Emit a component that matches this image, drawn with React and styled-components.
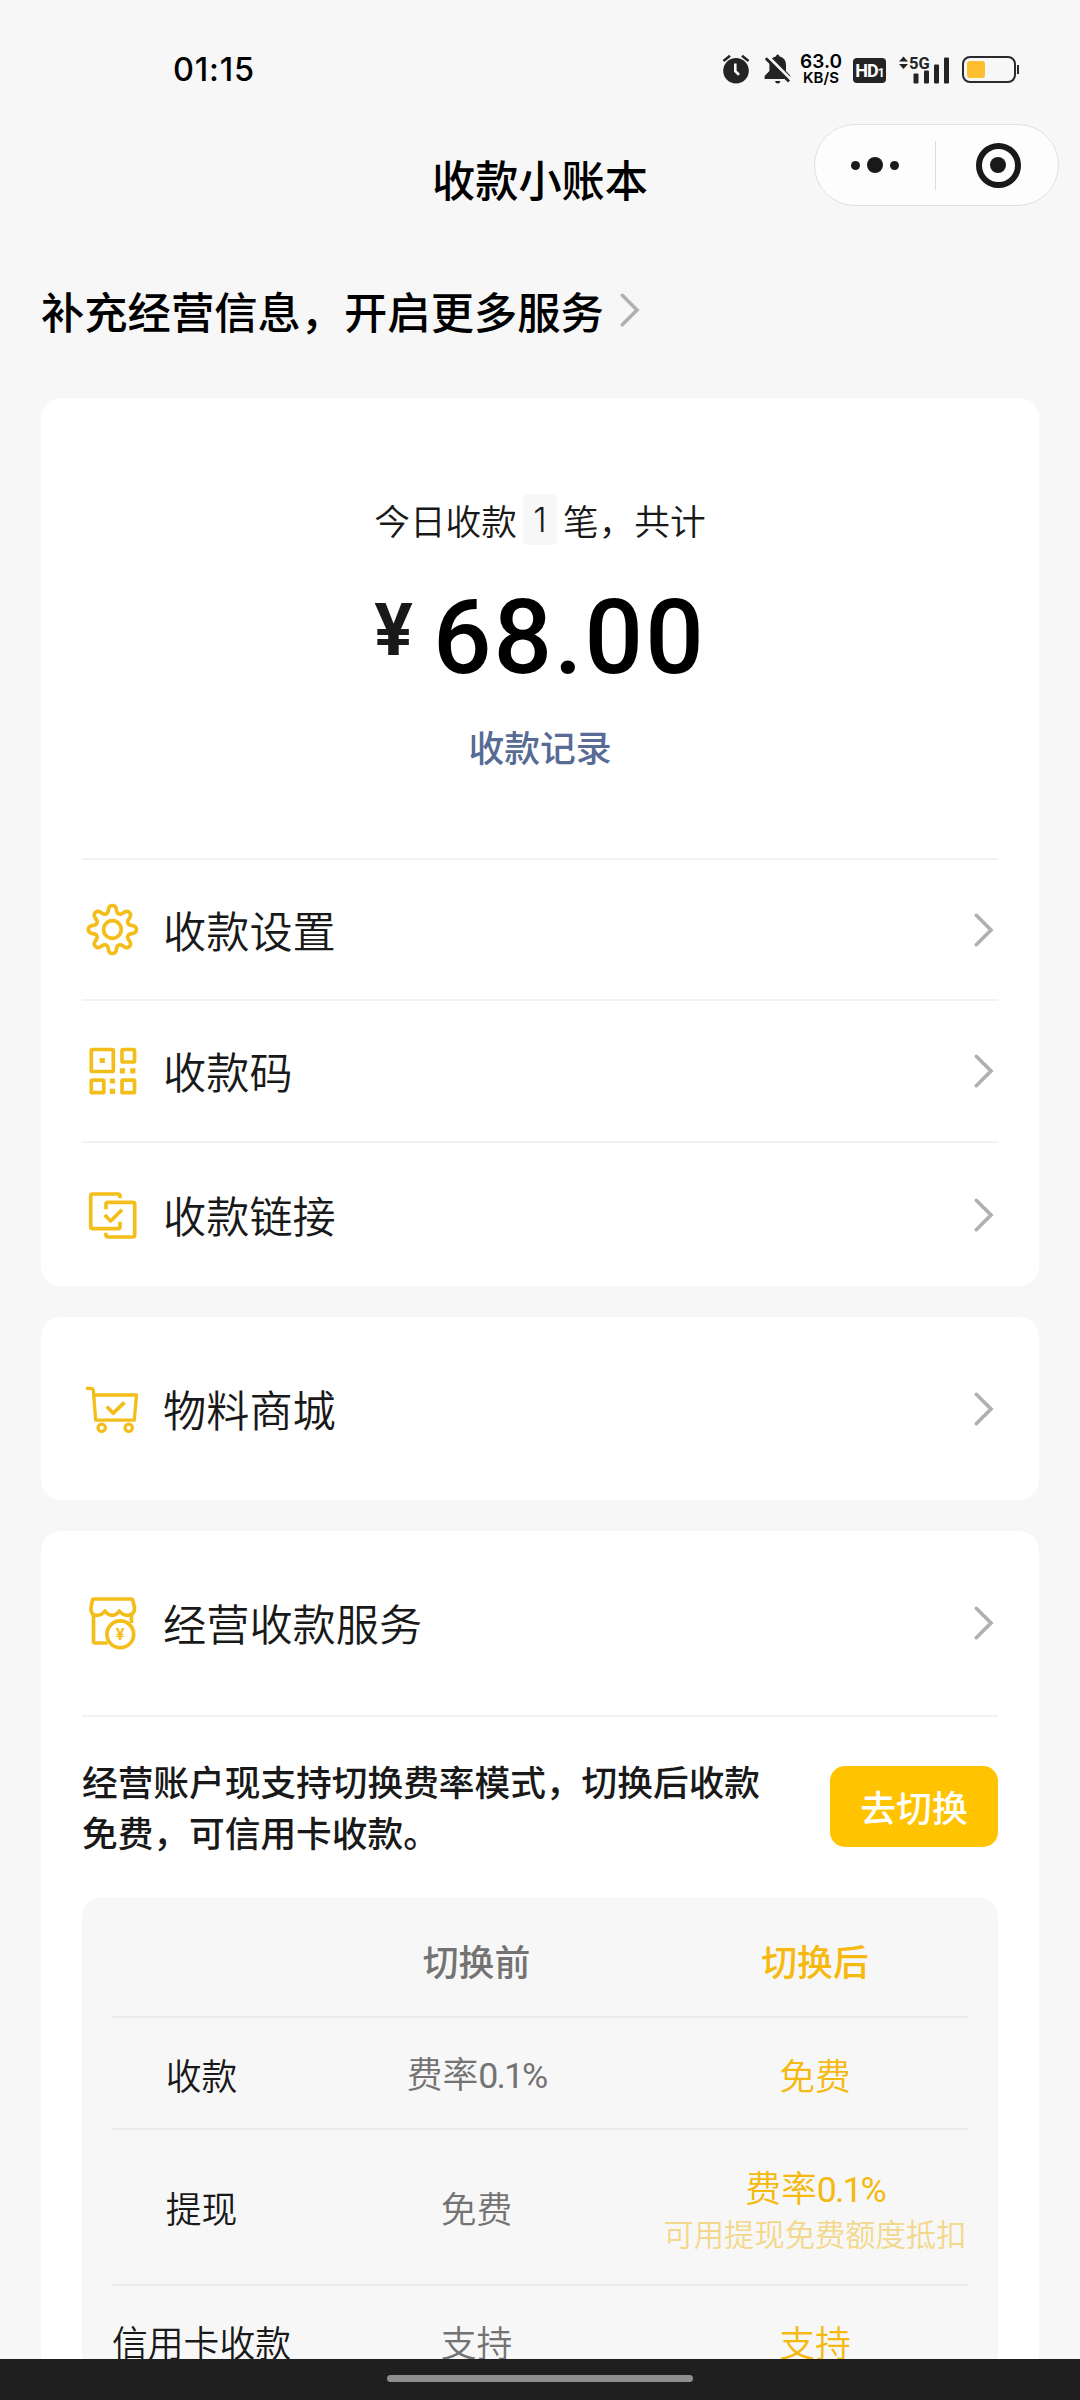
import React from "react";
import styled, { createGlobalStyle } from "styled-components";

const YELLOW = "#f4be1a";

const GlobalStyle = createGlobalStyle`
    * {
        box-sizing: border-box;
    }
    body {
        margin: 0;
        background: #f7f7f7;
        font-family: "Noto Sans CJK SC", sans-serif;
        color: #191919;
    }
`;

const Phone = styled.div`
    width: 1080px;
    height: 2400px;
    display: flex;
    flex-direction: column;
    overflow: hidden;
    background: #f7f7f7;
`;

const StatusBar = styled.header`
    flex: none;
    height: 124px;
    padding: 14px 61px 0 173px;
    display: flex;
    align-items: center;
    justify-content: space-between;
    font-family: Inter, sans-serif;
    color: #000;
`;

const Clock = styled.span`
    padding-top: 2px;
    font-size: 32.5px;
    font-weight: 450;
    line-height: 40px;
    letter-spacing: 0.8px;
`;

const StatusIcons = styled.div`
    display: flex;
    align-items: center;
`;

const Speed = styled.div`
    width: 42px;
    margin: 0 11px 0 8px;
    text-align: center;
    font-size: 19px;
    font-weight: 600;
    line-height: 17px;
    white-space: nowrap;

    small {
        display: block;
        font-size: 15px;
        font-weight: 600;
        line-height: 15px;
    }
`;

const HdBadge = styled.span`
    width: 33px;
    height: 25px;
    margin: 2px 13px 0 0;
    border-radius: 4px;
    background: #242424;
    color: #fff;
    display: flex;
    align-items: baseline;
    justify-content: center;
    font-family: Roboto, sans-serif;
    font-size: 18px;
    font-weight: 700;
    line-height: 25px;
    letter-spacing: -1px;

    small {
        font-size: 12px;
    }
`;

const Battery = styled.div`
    width: 54px;
    height: 27px;
    padding: 3px;
    border: 2px solid #2a2a2e;
    border-radius: 8px;
    margin: 0 1px 0 12px;
`;

const Charge = styled.div`
    width: 18px;
    height: 17px;
    border-radius: 3px;
    background: #ffbe2e;
`;

const BatteryTip = styled.div`
    width: 2px;
    height: 9px;
    background: #2a2a2e;
`;

const TitleBar = styled.div`
    flex: none;
    height: 82px;
    padding-right: 21px;
    display: grid;
    grid-template-columns: 266px 1fr 245px;
`;

const Title = styled.h1`
    grid-column: 2;
    margin: 28px 0 0;
    text-align: center;
    font-size: 43.2px;
    font-weight: 500;
    line-height: 52px;
    color: #000;
`;

const Capsule = styled.div`
    height: 82px;
    border: 1px solid #e0e0e0;
    border-radius: 41px;
    background: #fdfdfd;
    display: flex;
    align-items: center;
`;

const CapsuleHalf = styled.div`
    flex: 1;
    display: flex;
    justify-content: center;
    align-items: center;
    gap: 7px;
    padding-left: ${(props) => (props.$close ? 3 : 0)}px;
`;

const CapsuleDivider = styled.div`
    width: 1px;
    height: 49px;
    background: #dcdcdc;
`;

const Dot = styled.span`
    width: ${(props) => props.$size}px;
    height: ${(props) => props.$size}px;
    border-radius: 50%;
    background: #191919;
`;

const Ring = styled.span`
    width: 45px;
    height: 45px;
    border: 6px solid #191919;
    border-radius: 50%;
    display: flex;
    align-items: center;
    justify-content: center;
`;

const Notice = styled.div`
    flex: none;
    height: 192px;
    padding: 15px 0 0 41px;
    display: flex;
    align-items: center;
    gap: 16px;
    font-size: 43.3px;
    font-weight: 500;
    color: #000;
`;

const Cards = styled.main`
    flex: 1;
    min-height: 0;
    overflow: hidden;
    padding: 0 41px;
    display: flex;
    flex-direction: column;
    gap: 31px;
`;

const Card = styled.section`
    flex: none;
    padding: 0 41px;
    border-radius: 20px;
    background: #fff;
`;

const Summary = styled.div`
    height: 460px;
    padding-top: 96px;
    display: flex;
    flex-direction: column;
    align-items: center;
`;

const Today = styled.div`
    display: flex;
    align-items: center;
    font-size: 35.7px;
    font-weight: 350;
    line-height: 51px;
`;

const Count = styled.span`
    width: 34px;
    margin: 0 6px;
    border-radius: 5px;
    background: #f7f7f7;
    text-align: center;
    font-family: Inter, sans-serif;
    font-size: 34px;
    font-weight: 300;
`;

const Amount = styled.div`
    height: 100px;
    margin-top: 42px;
    display: flex;
    align-items: flex-start;
    font-family: Roboto, sans-serif;
    font-size: 103px;
    font-weight: 500;
    line-height: 102px;
    letter-spacing: 2px;
    color: #000;
`;

const Currency = styled.span`
    margin-right: 20px;
    font-size: 72px;
    font-weight: 700;
    line-height: 88px;
    letter-spacing: 0;
    color: #191919;
`;

const RecordLink = styled.a`
    margin-top: 33px;
    font-size: 35.8px;
    font-weight: 500;
    line-height: 52px;
    color: #576b95;
`;

const Row = styled.div`
    height: ${(props) => props.$height}px;
    border-top: ${(props) => (props.$divided ? "2px solid #f2f2f2" : "none")};
    padding-right: 4px;
    display: flex;
    align-items: center;
`;

const RowLabel = styled.span`
    flex: 1;
    margin-left: 21px;
    font-size: 43.2px;
    font-weight: 350;
    line-height: 60px;
    padding-bottom: 2px;
`;

const Switch = styled.div`
    height: 183px;
    border-top: 2px solid #f2f2f2;
    padding-bottom: 3px;
    display: flex;
    align-items: center;
    justify-content: space-between;
`;

const SwitchText = styled.p`
    width: 694px;
    margin: 0;
    font-size: 35.7px;
    font-weight: 500;
    line-height: 51px;
`;

const SwitchButton = styled.button`
    width: 168px;
    height: 81px;
    padding: 0;
    border: 0;
    border-radius: 15px;
    background: #ffc300;
    color: #fff;
    font-family: inherit;
    font-size: 35.8px;
    font-weight: 500;
`;

const Table = styled.div`
    padding: 0 30px;
    border-radius: 18px;
    background: #f7f7f7;
`;

const TableRow = styled.div`
    height: ${(props) => props.$height}px;
    border-bottom: 2px solid #eaeaea;
    padding-top: ${(props) => props.$top || 0}px;
    display: grid;
    grid-template-columns: 179px 1fr 306px;
    align-items: center;
    text-align: center;
    font-size: 35.8px;
    font-weight: ${(props) => (props.$head ? 500 : 350)};
    line-height: 50px;
`;

const Before = styled.span`
    color: #737373;
`;

const After = styled.span`
    color: #f5b90f;
`;

const Rate = styled.span`
    font-family: Roboto, sans-serif;
    font-weight: 400;
    letter-spacing: -2px;
`;

const Hint = styled.small`
    display: block;
    margin-top: -3px;
    font-size: 30.3px;
    line-height: 42px;
    color: #f3d78a;
    white-space: nowrap;
`;

const HomeBar = styled.footer`
    flex: none;
    height: 41px;
    padding-top: 16px;
    background: #1f1f1f;

    &::before {
        content: "";
        display: block;
        width: 306px;
        height: 7px;
        margin: 0 auto;
        border-radius: 4px;
        background: #8f8f8f;
    }
`;

const LineIcon = styled.svg.attrs({ width: 60, height: 60, viewBox: "0 0 60 60" })`
    flex: none;
    fill: none;
    stroke: ${YELLOW};
    stroke-width: 3.7;
    stroke-linejoin: round;
`;

// eight rounded teeth around the centre
const gearPath = () => {
    const points = [];
    for (let i = 0; i < 240; i++) {
        const a = (i / 240) * Math.PI * 2;
        const wave = Math.cos(8 * a);
        const r = 20.4 + 3.6 * (Math.tanh(1.4 * wave) / Math.tanh(1.4));
        points.push(`${(30.4 + r * Math.cos(a)).toFixed(2)} ${(29.5 + r * Math.sin(a)).toFixed(2)}`);
    }
    return `M${points.join("L")}Z`;
};

const GearIcon = () => (
    <LineIcon>
        <path d={gearPath()} />
        <circle cx="30.4" cy="29.5" r="8.8" />
    </LineIcon>
);

const CodeIcon = () => (
    <LineIcon>
        <rect x="9.3" y="8.5" width="22" height="22" rx="1" />
        <rect x="40" y="8.5" width="12.5" height="12.5" rx="1" />
        <rect x="9.3" y="39.2" width="12.5" height="12.5" rx="1" />
        <rect x="40" y="39.2" width="12.5" height="12.5" rx="1" />
        <path
            d="M17.7 19.5h5.2M37.8 29.8h5.2M48.2 29.8h5.2M27.8 40h5.2M27.8 50.3h5.2"
            strokeWidth="5.2"
        />
    </LineIcon>
);

const LinkIcon = () => (
    <LineIcon>
        <path d="M38 13.3V11Q38 9 36 9H10.7Q8.7 9 8.7 11V41.7Q8.7 43.7 10.7 43.7H36Q38 43.7 38 41.7V36.7" />
        <path d="M24 24.3V19.3Q24 17.3 26 17.3H50.7Q52.7 17.3 52.7 19.3V50Q52.7 52 50.7 52H26Q24 52 24 50V47.7" />
        <path d="M22.7 30l6 6L40 24.7" />
    </LineIcon>
);

const CartIcon = () => (
    <LineIcon>
        <path d="M4 9.3H8.5Q11.2 9.3 11.4 12L13.7 41.2H52.3L54.5 16H11.8" strokeWidth="3.3" />
        <path d="M24.7 27.5l6.6 6.7L42.5 23.3" />
        <circle cx="19.7" cy="48.8" r="3.7" strokeWidth="3.2" />
        <circle cx="46.7" cy="48.8" r="3.7" strokeWidth="3.2" />
    </LineIcon>
);

const ShopIcon = () => (
    <LineIcon>
        <path d="M11.5 6H49.2Q50.4 6 50.7 7L52.5 14.5Q52.8 22.3 45.5 22.3Q40.5 22.3 37.3 18Q34.5 22.3 30.3 22.3Q26 22.3 23 18Q20 22.3 15 22.3Q8.2 22.3 9 14.5L10.5 7Q10.7 6 11.5 6Z" />
        <path d="M11.5 22V48Q11.5 50 13.5 50H25.5M49.5 21.5V30" />
        <circle cx="38.3" cy="41.3" r="13.4" />
        <text
            x="38.3"
            y="47.3"
            textAnchor="middle"
            fontFamily="Roboto, sans-serif"
            fontSize="16.5"
            fontWeight="700"
            fill={YELLOW}
            stroke="none"
        >
            ¥
        </text>
    </LineIcon>
);

const Chevron = () => (
    <svg width="20" height="34" viewBox="0 0 20 34" fill="none" stroke="#b0b0b0" strokeWidth="3.6">
        <path d="M2.3 2.3L17 17L2.3 31.7" strokeLinecap="round" />
    </svg>
);

const AlarmIcon = () => (
    <svg width="28" height="30" viewBox="0 0 28 30" fill="none">
        <circle cx="14" cy="16.7" r="12.8" fill="#242424" />
        <path d="M1.5 7L8 1.8M26.5 7L20 1.8" stroke="#242424" strokeWidth="2.6" />
        <path d="M13.3 9.5V17.2L17 20.8" stroke="#f7f7f7" strokeWidth="2.6" />
    </svg>
);

const MutedIcon = styled(({ className }) => (
    <svg className={className} width="28" height="30" viewBox="0 0 28 30">
        <path
            d="M13.7.6q1.6 0 1.6 1.6Q22 4 22 11V17l4.2 4.6V25H.6V22L5.4 17V11Q5.4 4 12.1 2.2 12.1.6 13.7.6ZM11 27H16.5Q16 29.5 13.7 29.5 11.5 29.5 11 27Z"
            fill="#242424"
        />
        <path d="M3 1.5L28 26.5" stroke="#f7f7f7" strokeWidth="3" />
        <path d="M1.8 4.2L25 27.4" stroke="#242424" strokeWidth="2.8" />
    </svg>
))`
    margin-left: 14px;
`;

const SignalIcon = () => (
    <svg width="51" height="30" viewBox="0 0 51 30" fill="#242424">
        <path d="M0 7.5L4.5 2.5L9 7.5ZM0 10L4.5 15L9 10Z" />
        <text x="10" y="14.6" fontFamily="Roboto, sans-serif" fontSize="16.5" fontWeight="700">
            5G
        </text>
        <rect x="14.5" y="19.5" width="5" height="10" rx="1" />
        <rect x="25" y="16.5" width="5" height="13" rx="1" />
        <rect x="35" y="10.5" width="5" height="19" rx="1" />
        <rect x="45" y="3.5" width="5" height="26" rx="1" />
    </svg>
);

const tools = [
    { label: "收款设置", Icon: GearIcon, height: 141 },
    { label: "收款码", Icon: CodeIcon, height: 142 },
    { label: "收款链接", Icon: LinkIcon, height: 145 },
];

function MenuRow({ label, Icon, height, divided }) {
    return (
        <Row $height={height} $divided={divided}>
            <Icon />
            <RowLabel>{label}</RowLabel>
            <Chevron />
        </Row>
    );
}

export default function App() {
    return (
        <Phone>
            <GlobalStyle />
            <StatusBar>
                <Clock>01:15</Clock>
                <StatusIcons>
                    <AlarmIcon />
                    <MutedIcon />
                    <Speed>
                        63.0<small>KB/S</small>
                    </Speed>
                    <HdBadge>
                        HD<small>1</small>
                    </HdBadge>
                    <SignalIcon />
                    <Battery>
                        <Charge />
                    </Battery>
                    <BatteryTip />
                </StatusIcons>
            </StatusBar>
            <TitleBar>
                <Title>收款小账本</Title>
                <Capsule>
                    <CapsuleHalf>
                        <Dot $size={9} />
                        <Dot $size={16} />
                        <Dot $size={9} />
                    </CapsuleHalf>
                    <CapsuleDivider />
                    <CapsuleHalf $close>
                        <Ring>
                            <Dot $size={16} />
                        </Ring>
                    </CapsuleHalf>
                </Capsule>
            </TitleBar>
            <Notice>
                补充经营信息，开启更多服务
                <Chevron />
            </Notice>
            <Cards>
                <Card>
                    <Summary>
                        <Today>
                            今日收款<Count>1</Count>笔，共计
                        </Today>
                        <Amount>
                            <Currency>¥</Currency>68.00
                        </Amount>
                        <RecordLink>收款记录</RecordLink>
                    </Summary>
                    {tools.map((tool) => (
                        <MenuRow key={tool.label} divided {...tool} />
                    ))}
                </Card>
                <Card>
                    <MenuRow label="物料商城" Icon={CartIcon} height={183} />
                </Card>
                <Card>
                    <MenuRow label="经营收款服务" Icon={ShopIcon} height={184} />
                    <Switch>
                        <SwitchText>经营账户现支持切换费率模式，切换后收款免费，可信用卡收款。</SwitchText>
                        <SwitchButton>去切换</SwitchButton>
                    </Switch>
                    <Table>
                        <TableRow $height={120} $top={6} $head>
                            <span />
                            <Before>切换前</Before>
                            <After>切换后</After>
                        </TableRow>
                        <TableRow $height={112} $top={1}>
                            <span>收款</span>
                            <Before>
                                费率<Rate>0.1%</Rate>
                            </Before>
                            <After>免费</After>
                        </TableRow>
                        <TableRow $height={156}>
                            <span>提现</span>
                            <Before>免费</Before>
                            <After>
                                费率<Rate>0.1%</Rate>
                                <Hint>可用提现免费额度抵扣</Hint>
                            </After>
                        </TableRow>
                        <TableRow $height={112}>
                            <span>信用卡收款</span>
                            <Before>支持</Before>
                            <After>支持</After>
                        </TableRow>
                    </Table>
                </Card>
            </Cards>
            <HomeBar />
        </Phone>
    );
}
